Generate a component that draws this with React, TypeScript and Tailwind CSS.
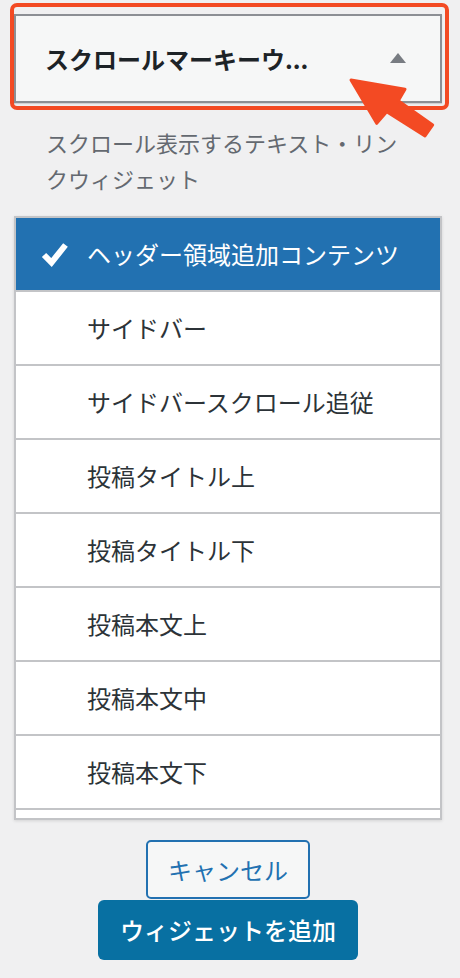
import React from "react";

const items = [
  "ヘッダー領域追加コンテンツ",
  "サイドバー",
  "サイドバースクロール追従",
  "投稿タイトル上",
  "投稿タイトル下",
  "投稿本文上",
  "投稿本文中",
  "投稿本文下",
  "",
];

export default function App() {
  return (
    <div
      className="relative w-[460px] h-[978px] overflow-hidden bg-[#f0f0f1]"
      style={{ fontFamily: '"Noto Sans CJK JP", "Noto Sans", sans-serif' }}
    >
      {/* header select with annotation outline */}
      <div className="ml-[10px] mt-[3px] w-[439px] rounded-[7px] border-4 border-[#f34a23] pt-[7px] pr-[3px] pb-[3px]">
        <div className="flex h-[89px] items-center justify-between border-2 border-[#8c8f94] bg-[#f6f7f7] pl-[29px] pr-[34px] shadow-[0_1px_1px_rgba(0,0,0,0.12)]">
          <span className="text-[24px] font-bold leading-none text-[#1d2327]">
            スクロールマーキーウ...
          </span>
          <svg width="16" height="10" viewBox="0 0 16 10" className="mt-[-2px]">
            <polygon points="8,0 16,10 0,10" fill="#787c82" />
          </svg>
        </div>
      </div>

      {/* description */}
      <div className="mt-[14px] pl-[46px] pr-[50px] text-[22px] leading-[36px] text-[#646970]">
        スクロール表示するテキスト・リンクウィジェット
      </div>

      {/* list */}
      <div className="mt-[20px] ml-[14px] h-[604px] w-[428px] overflow-hidden border-2 border-[#c3c4c7] bg-white shadow-[0_1px_3px_rgba(0,0,0,0.12)]">
        {items.map((t, i) => (
          <div
            key={i}
            className={
              i === 0
                ? "flex h-[74px] shrink-0 items-center border-b-2 border-[#c3c4c7] bg-[#2271b1] text-white"
                : "flex h-[74px] shrink-0 items-center border-b-2 border-[#c3c4c7] bg-white text-[#2c3338]"
            }
          >
            <div className="flex w-[71px] justify-start pl-[25px]">
              {i === 0 && (
                <svg width="28" height="25" viewBox="0 0 28 25">
                  <polyline
                    points="3,13 10.5,20.5 24.5,3"
                    fill="none"
                    stroke="#ffffff"
                    strokeWidth="6"
                    strokeLinejoin="miter"
                  />
                </svg>
              )}
            </div>
            {t && <span className="text-[24px] leading-none">{t}</span>}
          </div>
        ))}
      </div>

      {/* buttons */}
      <div className="ml-[14px] mt-[20px] flex w-[428px] flex-col items-center">
        <button className="flex h-[59px] w-[164px] items-center justify-center rounded-[5px] border-2 border-[#2271b1] bg-[#f6f7f7] text-[24px] leading-none text-[#2271b1]">
          キャンセル
        </button>
        <button className="mt-[1px] flex h-[60px] w-[260px] items-center justify-center rounded-[6px] bg-[#0870a2] text-[24px] font-medium leading-none text-white">
          ウィジェットを追加
        </button>
      </div>

      {/* annotation arrow */}
      <svg
        className="pointer-events-none absolute left-0 top-0"
        width="460"
        height="200"
        viewBox="0 0 460 200"
      >
        <polygon
          points="351,80 405,89.3 398.3,100.7 432.7,125 425,136 386.7,111.7 376.7,123.3"
          fill="#f34a23"
          stroke="#f34a23"
          strokeWidth="3"
          strokeLinejoin="round"
        />
      </svg>
    </div>
  );
}
